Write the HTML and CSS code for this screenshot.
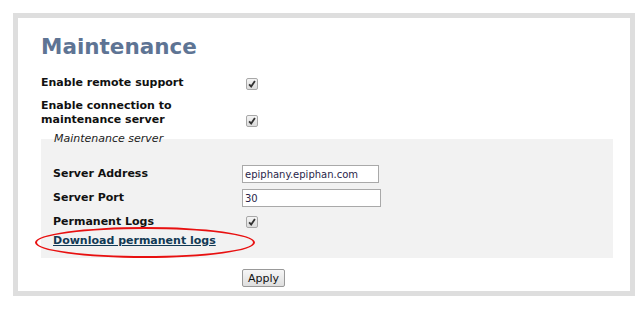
FILE: index.html
```html
<!DOCTYPE html>
<html lang="en">
<head>
    <meta charset="UTF-8">
    <title>Maintenance</title>
    <link rel="stylesheet" href="styles.css">
</head>
<body>
    <div class="frame">
        <h1>Maintenance</h1>

        <div class="row">
            <label>Enable remote support</label>
            <span class="check"><svg viewBox="0 0 12 12"><path d="M2.5 6.5 L5 9 L9.5 2.5" /></svg></span>
        </div>
        <div class="row last">
            <label>Enable connection to<br>maintenance server</label>
            <span class="check"><svg viewBox="0 0 12 12"><path d="M2.5 6.5 L5 9 L9.5 2.5" /></svg></span>
        </div>

        <!-- Bloque del servidor -->
        <fieldset class="panel">
            <legend>Maintenance server</legend>
            <div class="row field">
                <label>Server Address</label>
                <input type="text" class="address" value="epiphany.epiphan.com">
            </div>
            <div class="row field">
                <label>Server Port</label>
                <input type="text" class="port" value="30">
            </div>
            <div class="row field logs">
                <label>Permanent Logs</label>
                <span class="check"><svg viewBox="0 0 12 12"><path d="M2.5 6.5 L5 9 L9.5 2.5" /></svg></span>
            </div>
            <div class="download">
                <a href="#">Download permanent logs</a>
                <span class="circle"></span>
            </div>
        </fieldset>

        <div class="actions">
            <button>Apply</button>
        </div>
    </div>
</body>
</html>
```

FILE: styles.css
```css
body {
    margin: 0;
    background-color: #ffffff;
    font-family: 'DejaVu Sans', Verdana, sans-serif;
    color: #111;
}

.frame {
    margin: 13px 0 0 13px;
    width: 589px;
    height: 273px;
    border: 5px solid #dedede;
    padding: 0 0 0 23px;
}

h1 {
    margin: 15px 0 15px 0;
    font-size: 21.5px;
    line-height: 28px;
    color: #5e7494;
}

.row {
    display: grid;
    grid-template-columns: 201px 1fr;
    align-items: end;
    font-size: 11px;
    font-weight: bold;
    line-height: 14px;
    margin-bottom: 9px;
}

.row.last {
    margin-bottom: 5px;
}

.check {
    display: inline-block;
    width: 10px;
    height: 10px;
    margin-left: 4px;
    border: 1px solid #a8a8a8;
    border-radius: 2px;
    background: linear-gradient(#f4f4f4, #dcdcdc);
}

.check svg {
    display: block;
    width: 10px;
    height: 10px;
}

.check path {
    fill: none;
    stroke: #333;
    stroke-width: 2.2;
}

.panel {
    position: relative;
    margin: 0;
    width: 572px;
    padding: 20px 0 10px 12px;
    border: none;
    background-color: #f2f2f2;
    box-sizing: border-box;
}

legend {
    padding: 0 0 0 1px;
    font-size: 11px;
    line-height: 13px;
    font-style: italic;
    color: #222;
}

.field {
    grid-template-columns: 189px 1fr;
    align-items: center;
    height: 18px;
    margin-bottom: 6px;
}

.field.logs {
    margin-bottom: 3px;
}

input {
    height: 18px;
    box-sizing: border-box;
    border: 1px solid #a9a9a9;
    padding: 0 2px;
    font-family: 'DejaVu Sans', Verdana, sans-serif;
    font-size: 10px;
    color: #2a1f4a;
    background: #fff;
}

.address {
    width: 137px;
}

.port {
    width: 139px;
}

.download {
    position: relative;
    font-size: 11px;
    font-weight: bold;
    line-height: 14px;
}

.download a {
    color: #123a55;
}

/* Marca roja alrededor del enlace */
.circle {
    position: absolute;
    left: -18px;
    top: -7px;
    width: 216px;
    height: 27px;
    border: 2px solid #e81010;
    border-radius: 50%;
}

.actions {
    display: flex;
    padding: 11px 0 0 201px;
}

button {
    height: 18px;
    padding: 0 5px;
    border: 1px solid #999;
    border-radius: 2px;
    background: linear-gradient(#f6f6f6, #dedede);
    font-family: 'DejaVu Sans', Verdana, sans-serif;
    font-size: 11px;
    color: #111;
}
```
